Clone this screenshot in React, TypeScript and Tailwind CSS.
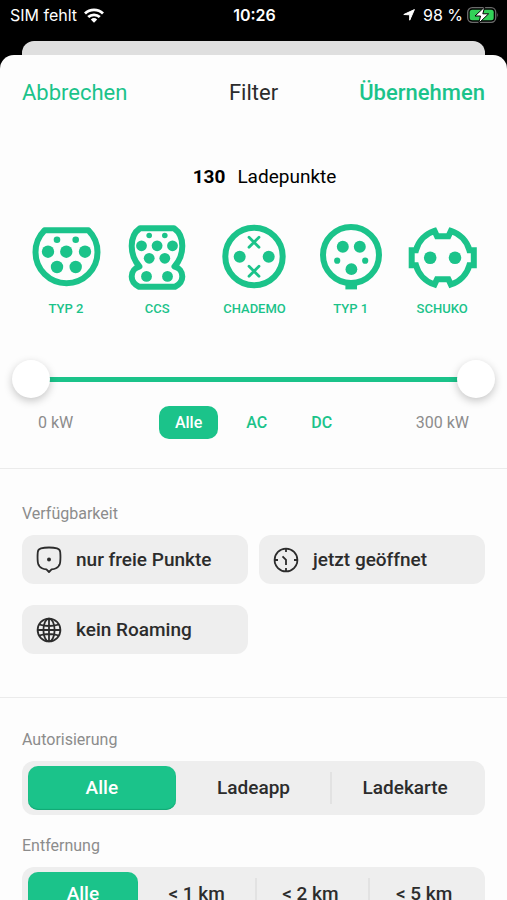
import { useState } from "react"
import type { ReactNode } from "react"

const PlugIcon = ({ children }: { children: ReactNode }) => (
  <svg width="72" height="68" viewBox="0 0 72 68" fill="none" stroke="currentColor" strokeWidth="6" aria-hidden="true">
    {children}
  </svg>
)

const Pins = ({ pins }: { pins: [number, number, number][] }) => (
  <g fill="currentColor" stroke="none">
    {pins.map(([x, y, r]) => (
      <circle key={`${x}-${y}`} cx={x} cy={y} r={r} />
    ))}
  </g>
)

const plugs = [
  {
    name: "TYP 2",
    icon: (
      <PlugIcon>
        <path strokeLinejoin="round" d="M14.5 6.3H58.5A31 31 0 1 1 14.5 6.3Z" />
        <Pins
          pins={[
            [27, 15.7, 3.3],
            [45.7, 15.7, 3.3],
            [18, 27.7, 6.2],
            [36.3, 27.7, 6.2],
            [55, 27.7, 6.2],
            [27, 43, 6.2],
            [45.7, 43, 6.2],
          ]}
        />
      </PlugIcon>
    ),
  },
  {
    name: "CCS",
    icon: (
      <PlugIcon>
        <path
          strokeLinejoin="round"
          d="M19 4.2H53C58.5 8 61.3 15 61.3 22C61.3 30 58.5 37 53.500 42.500C58 43.500 61.300 47.500 61.300 52.500C61.300 57 58.500 60.500 54 62.700H18C13.500 60.500 10.700 57 10.700 52.500C10.700 47.500 14 43.500 18.500 42.500C13.500 37 10.700 30 10.700 22C10.700 15 13.500 8 19 4.200Z"
        />
        <Pins
          pins={[
            [28.2, 11.5, 2.8],
            [43.8, 11.5, 2.8],
            [20.5, 21.8, 5.4],
            [36.1, 21.8, 5.4],
            [51.5, 21.8, 5.4],
            [28.2, 34.3, 5.4],
            [43.8, 34.3, 5.4],
            [25.5, 52.4, 5.4],
            [46.5, 52.4, 5.4],
          ]}
        />
      </PlugIcon>
    ),
  },
  {
    name: "CHADEMO",
    icon: (
      <PlugIcon>
        <circle cx="36" cy="32.5" r="28.7" />
        <path strokeWidth="2.8" strokeLinecap="round" d="M31 13.3l10 10m0-10l-10 10M31 42.2l10 10m0-10l-10 10" />
        <Pins
          pins={[
            [21.7, 32.7, 6],
            [50.7, 32.7, 6],
          ]}
        />
      </PlugIcon>
    ),
  },
  {
    name: "TYP 1",
    icon: (
      <PlugIcon>
        <circle cx="36" cy="31" r="28" />
        <path strokeWidth="11.6" d="M36.2 60V65.4" />
        <Pins
          pins={[
            [27.8, 22.8, 6],
            [44.8, 22.8, 6],
            [22.2, 36.7, 3.1],
            [50.2, 36.7, 3.1],
            [36.4, 45.2, 5.9],
          ]}
        />
      </PlugIcon>
    ),
  },
  {
    name: "SCHUKO",
    icon: (
      <PlugIcon>
        <path d="M28.5 6.9L31 12.2H42.4L44.9 6.9A28 28 0 0 1 63.4 26.2H67.8V41.200H63.400A28 28 0 0 1 44.900 60.500L42.400 55.200H31L28.500 60.500A28 28 0 0 1 10 41.200H5.700V26.200H10A28 28 0 0 1 28.500 6.900Z" />
        <Pins
          pins={[
            [24.2, 33.7, 6.3],
            [49, 33.7, 6.3],
          ]}
        />
      </PlugIcon>
    ),
  },
]

const iconProps = {
  width: 26,
  height: 28,
  viewBox: "0 0 26 28",
  fill: "none",
  stroke: "currentColor",
  strokeWidth: 1.8,
  "aria-hidden": true,
} as const

const availability = [
  {
    name: "nur freie Punkte",
    icon: (
      <svg {...iconProps} strokeLinejoin="round">
        <path d="M13 1.5C16.500 1.500 19 1.800 21 2.400C23 3 24 4.200 24.200 6C24.500 9 24.500 13 24.200 16C23.900 19 22.500 21 20 22.200C18.500 22.900 17 23.200 15.600 23.400L13 26L10.400 23.400C9 23.200 7.500 22.900 6 22.200C3.500 21 2.100 19 1.800 16C1.500 13 1.500 9 1.800 6C2 4.200 3 3 5 2.400C7 1.800 9.500 1.500 13 1.500Z" />
        <circle cx="13" cy="13.500" r="2" fill="currentColor" stroke="none" />
      </svg>
    ),
  },
  {
    name: "jetzt geöffnet",
    icon: (
      <svg {...iconProps}>
        <circle cx="13" cy="14" r="11.4" />
        <path d="M13 3V6M13 22V25M2 14H5M21 14H24M9.5 10.3L13 13.8V19" />
      </svg>
    ),
  },
  {
    name: "kein Roaming",
    icon: (
      <svg {...iconProps}>
        <circle cx="13" cy="14" r="11.4" />
        <ellipse cx="13" cy="14" rx="5.6" ry="11.4" />
        <path d="M13 2.6V25.4M1.6 14H24.4M3.2 8.5C9 10.3 17 10.3 22.8 8.5M3.2 19.5C9 17.7 17 17.7 22.8 19.5" />
      </svg>
    ),
  },
]

function StatusBar() {
  return (
    <div className="grid h-[30px] grid-cols-[1fr_auto_1fr] items-center pl-[10px] pr-2 font-[Inter,sans-serif] text-[16px] leading-5 text-white">
      <div className="flex items-center gap-[7px]">
        <span>SIM fehlt</span>
        <svg width="20" height="15" viewBox="0 0 20 15" fill="none" stroke="currentColor" strokeWidth="2.8" aria-hidden="true">
          <path d="M1 5.6C6 .7 14 .7 19 5.6M4.2 9.1C7.5 6 12.5 6 15.8 9.1" />
          <path d="M6.8 11.4Q10 8.7 13.2 11.4L10 14.8Z" fill="currentColor" stroke="none" />
        </svg>
      </div>
      <span className="font-semibold">10:26</span>
      <div className="flex items-center justify-end gap-1">
        <svg className="mr-1" width="12" height="12" viewBox="0 0 12 12" fill="currentColor" stroke="currentColor" strokeLinejoin="round" aria-hidden="true">
          <path d="M11.4 .6L6.700 11.200V5.800L.8 5.500Z" />
        </svg>
        <span>98 %</span>
        <svg width="32" height="18" viewBox="0 0 32 18" aria-hidden="true">
          <rect x=".7" y="1.7" width="28" height="14.6" rx="4.5" fill="none" stroke="#6b6b6b" strokeWidth="1.3" />
          <path d="M30.3 6.5Q32 9 30.3 11.5Z" fill="#6b6b6b" />
          <rect x="2.7" y="3.7" width="24" height="10.6" rx="2.5" fill="#32d158" />
          <path d="M17.8 .8L8 10H13.5L11.8 17.2L21.6 7.8H15.8Z" fill="#fff" stroke="#000" strokeWidth="1" />
        </svg>
      </div>
    </div>
  )
}

const thumb =
  "pointer-events-none absolute inset-0 m-0 h-[38px] w-full appearance-none bg-transparent [&::-webkit-slider-thumb]:pointer-events-auto [&::-webkit-slider-thumb]:size-[38px] [&::-webkit-slider-thumb]:appearance-none [&::-webkit-slider-thumb]:rounded-full [&::-webkit-slider-thumb]:bg-white [&::-webkit-slider-thumb]:shadow-[0_3px_8px_rgba(0,0,0,0.22)]"

function PowerSlider() {
  const [min, setMin] = useState(0)
  const [max, setMax] = useState(300)

  return (
    <div className="relative mx-3 flex h-[38px] items-center px-[19px]">
      <div className="h-[5px] flex-1 bg-[#e4e4e4]">
        <div
          className="h-full bg-[#1bc38a]"
          style={{ marginLeft: `${min / 3}%`, width: `${(max - min) / 3}%` }}
        />
      </div>
      <input
        type="range"
        aria-label="Minimale Leistung in kW"
        min={0}
        max={300}
        value={min}
        onChange={(e) => setMin(Math.min(Number(e.target.value), max))}
        className={thumb}
      />
      <input
        type="range"
        aria-label="Maximale Leistung in kW"
        min={0}
        max={300}
        value={max}
        onChange={(e) => setMax(Math.max(Number(e.target.value), min))}
        className={thumb}
      />
    </div>
  )
}

function Segments({ label, options }: { label: string; options: string[] }) {
  const [selected, setSelected] = useState(0)

  return (
    <section>
      <h2 className="text-[16px] leading-5 text-[#8c8c8c]">{label}</h2>
      <div role="group" aria-label={label} className="mt-[11px] flex gap-1 rounded-xl bg-[#eeeeee] px-[6px] py-[5px]">
        {options.map((option, i) => (
          <button
            key={option}
            aria-pressed={selected === i}
            onClick={() => setSelected(i)}
            className={`relative h-11 flex-1 rounded-[10px] text-[19px] leading-6 font-medium ${
              selected === i ? "bg-[#1bc38a] text-white shadow-[inset_0_-1px_1px_#12a874]" : "text-[#2c2c2c]"
            } ${
              i > 0 && selected !== i && selected !== i - 1
                ? "before:absolute before:inset-y-[6px] before:-left-px before:w-[2px] before:bg-[#e2e2e2]"
                : ""
            }`}
          >
            {option}
          </button>
        ))}
      </div>
    </section>
  )
}

export default function App() {
  const [active, setActive] = useState<string[]>([])
  const [current, setCurrent] = useState("Alle")

  const toggle = (name: string) =>
    setActive(active.includes(name) ? active.filter((n) => n !== name) : [...active, name])

  return (
    <div className="flex h-screen flex-col overflow-hidden bg-black font-[Roboto,sans-serif]">
      <StatusBar />
      <div className="mx-[22px] mt-[11px] h-[14px] shrink-0 rounded-t-xl bg-[#dfdfdf]" />

      <main className="min-h-0 flex-1 overflow-y-auto rounded-t-[14px] bg-[#fdfdfd] [scrollbar-width:none]">
        <header className="grid grid-cols-[1fr_auto_1fr] items-center px-[22px] pt-6 text-[22px] leading-7">
          <button className="justify-self-start text-[#1bc38a]">Abbrechen</button>
          <h1 className="text-[#2c2c2c]">Filter</h1>
          <button className="justify-self-end font-medium text-[#1bc38a]">Übernehmen</button>
        </header>

        <p className="mt-[58px] flex justify-center gap-3 pl-[22px] text-[19px] leading-6 text-black">
          <strong className="font-bold">130</strong>
          <span>Ladepunkte</span>
        </p>

        <div className="mt-[35px] grid grid-cols-[92fr_91fr_104fr_89fr_94fr] pr-[18px] pl-5 text-[#1bc38a]">
          {plugs.map((plug) => (
            <button
              key={plug.name}
              aria-pressed={!active.includes(plug.name)}
              onClick={() => toggle(plug.name)}
              className="flex flex-col items-center gap-[9px] text-[13px] leading-4 font-medium aria-[pressed=false]:opacity-40"
            >
              {plug.icon}
              {plug.name}
            </button>
          ))}
        </div>

        <div className="mt-[43px]">
          <PowerSlider />
        </div>

        <div className="mt-2 grid grid-cols-[1fr_auto_1fr] items-center px-[38px] text-[16px] leading-5 text-[#8c8c8c]">
          <span>0 kW</span>
          <div role="group" aria-label="Stromart" className="flex gap-3 font-medium">
            {["Alle", "AC", "DC"].map((name) => (
              <button
                key={name}
                aria-pressed={current === name}
                onClick={() => setCurrent(name)}
                className={`h-[33px] rounded-[10px] px-4 ${current === name ? "bg-[#1bc38a] text-white" : "text-[#1bc38a]"}`}
              >
                {name}
              </button>
            ))}
          </div>
          <span className="justify-self-end">300 kW</span>
        </div>

        <section className="mt-[29px] border-t border-[#ebebeb] px-[22px] pt-[35px] pb-[43px]">
          <h2 className="text-[16px] leading-5 text-[#8c8c8c]">Verfügbarkeit</h2>
          <div className="mt-[11px] grid grid-cols-2 gap-x-[11px] gap-y-[21px]">
            {availability.map((item) => (
              <button
                key={item.name}
                aria-pressed={active.includes(item.name)}
                onClick={() => toggle(item.name)}
                className="flex h-[49px] items-center gap-[14px] rounded-xl bg-[#eeeeee] px-[14px] text-[19px] leading-6 font-medium text-[#2c2c2c] aria-pressed:bg-[#1bc38a] aria-pressed:text-white"
              >
                {item.icon}
                {item.name}
              </button>
            ))}
          </div>
        </section>

        <div className="flex flex-col gap-[21px] border-t border-[#ebebeb] px-[22px] pt-8 pb-10">
          <Segments label="Autorisierung" options={["Alle", "Ladeapp", "Ladekarte"]} />
          <Segments label="Entfernung" options={["Alle", "< 1 km", "< 2 km", "< 5 km"]} />
        </div>
      </main>
    </div>
  )
}
